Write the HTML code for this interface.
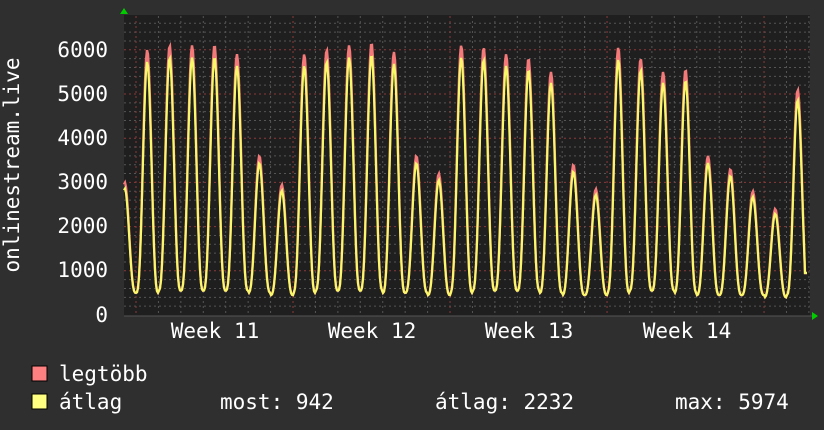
<!DOCTYPE html>
<html><head><meta charset="utf-8"><style>
html,body{margin:0;padding:0;background:#2f2f2f;width:824px;height:430px;overflow:hidden}
svg{display:block}
text{font-family:"DejaVu Sans Mono","Liberation Mono",monospace;fill:#fff;font-size:21px}
</style></head><body>
<svg id="s" width="824" height="430" xmlns="http://www.w3.org/2000/svg">
<rect x="0" y="0" width="824" height="430" fill="#2f2f2f"/>
<rect x="124" y="15" width="686" height="301" fill="#1f1f1f"/>
<g id="grid"></g>
<polyline id="mx" fill="none" stroke="#f47a7a" stroke-width="2.4"/>
<polyline id="av" fill="none" stroke="#f8f86a" stroke-width="2.2"/>
<polygon points="120,14 128,14 124,8" fill="#0c0"/>
<polygon points="812,312 812,320 818,316" fill="#0c0"/>
<g text-anchor="end">
<text x="108" y="57">6000</text><text x="108" y="101">5000</text><text x="108" y="145">4000</text>
<text x="108" y="189">3000</text><text x="108" y="233">2000</text><text x="108" y="277">1000</text>
<text x="108" y="322">0</text>
</g>
<text transform="translate(19,165) rotate(-90)" text-anchor="middle">onlinestream.live</text>
<g text-anchor="middle">
<text x="215" y="338">Week 11</text><text x="372" y="338">Week 12</text>
<text x="529" y="338">Week 13</text><text x="687" y="338">Week 14</text>
</g>
<rect x="32" y="366" width="15" height="15" fill="#ff8080" stroke="#000"/>
<rect x="32" y="394" width="15" height="15" fill="#ffff80" stroke="#000"/>
<text x="59" y="381">legtöbb</text>
<text x="59" y="409">átlag</text>
<text x="220" y="409">most: 942</text>
<text x="435" y="409">átlag: 2232</text>
<text x="675" y="409">max: 5974</text>
</svg>
<script>
var g=document.getElementById('grid'),h='';
for(var v=200;v<6800;v+=200){var y=315-v*0.0442;if(y<16)break;var maj=v%1000==0;
h+='<line x1="124" x2="810" y1="'+y+'" y2="'+y+'" stroke="'+(maj?'#8a3a3a':'#555')+'" stroke-dasharray="2,3"/>';}
for(var k=0;k<32;k++){var x=136+22.43*k;if(x>810)break;var maj=k%7==0;
h+='<line y1="16" y2="316" x1="'+x+'" x2="'+x+'" stroke="'+(maj?'#8a3a3a':'#555')+'" stroke-dasharray="2,3"/>';}
h+='<line x1="124" x2="812" y1="316" y2="316" stroke="#555"/>';
g.innerHTML=h;
var peaks=[3000,6000,6100,6100,6100,5900,3600,2950,5900,6000,6100,6150,5950,3600,3200,6100,6050,5900,5800,5500,3400,2850,6050,5800,5500,5550,3600,3300,2800,2400,5100];
var mins=[500,500,550,550,550,550,500,450,500,550,550,550,500,500,450,500,550,550,550,500,450,450,500,550,550,500,450,450,450,400,450];
var pa=[],pm=[];
for(var x=124;x<=807;x+=1){var d=(x-136)/22.43;var i=Math.floor(d)+1;var t=d-Math.floor(d);
var pk=peaks[Math.max(0,Math.min(peaks.length-1,i))],mn=mins[Math.max(0,Math.min(mins.length-1,i))];
var f=Math.pow((1+Math.cos(2*Math.PI*(t-0.5)))/2,1.5);
var m=mn+(pk-mn)*f;var a=mn+(pk*0.955-mn)*f;
if(x>=805)a=m=950;
pa.push(x+','+(315-a*0.0442).toFixed(1));pm.push(x+','+(315-m*0.0442).toFixed(1));}
document.getElementById('av').setAttribute('points',pa.join(' '));
document.getElementById('mx').setAttribute('points',pm.join(' '));
</script>
</body></html>
